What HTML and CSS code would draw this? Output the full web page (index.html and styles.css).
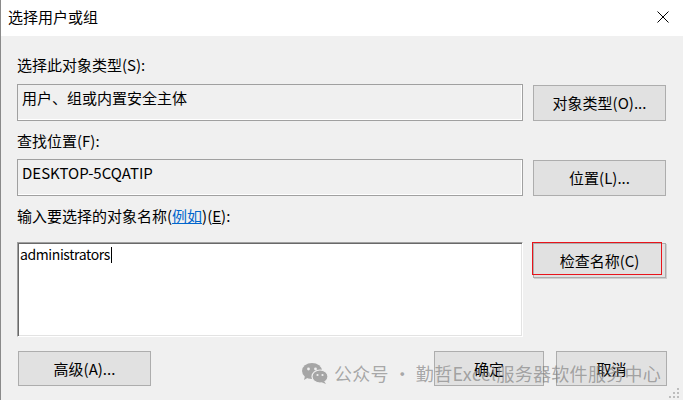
FILE: index.html
```html
<!DOCTYPE html>
<html lang="zh-CN">
<head>
<meta charset="utf-8">
<title>选择用户或组</title>
<link rel="stylesheet" href="styles.css">
</head>
<body>
<div class="window">
  <div class="titlebar">
    <span class="title">选择用户或组</span>
    <span class="close">
      <svg width="12" height="12" viewBox="0 0 12 12"><path d="M0.5 0.5 L11.5 11.5 M11.5 0.5 L0.5 11.5" stroke="#000" stroke-width="1" fill="none"/></svg>
    </span>
  </div>
  <div class="body">
    <div class="form">
      <div class="label first">选择此对象类型(S):</div>
      <div class="field">用户、组或内置安全主体</div>
      <div class="btn">对象类型(O)...</div>

      <div class="label">查找位置(F):</div>
      <div class="field">DESKTOP-5CQATIP</div>
      <div class="btn">位置(L)...</div>

      <div class="label third">输入要选择的对象名称(<a class="link">例如</a>)(<u>E</u>):</div>
      <div class="textarea">administrators<span class="caret"></span></div>
      <div class="btn check">检查名称(C)</div>
    </div>
    <div class="footer">
      <div class="btn adv">高级(A)...</div>
      <div class="spacer"></div>
      <div class="btn ok">确定</div>
      <div class="btn cancel">取消</div>
    </div>
    <div class="watermark">
      <svg class="wechat" width="26" height="21" viewBox="0 0 26 21">
        <ellipse cx="10" cy="8" rx="10" ry="8" fill="#9a9a9a"/>
        <path d="M3 13 L2 17 L7 14 Z" fill="#9a9a9a"/>
        <circle cx="6.5" cy="6" r="1.4" fill="#f0f0f0"/>
        <circle cx="13.5" cy="6" r="1.4" fill="#f0f0f0"/>
        <ellipse cx="18" cy="13.5" rx="8" ry="6.5" fill="#9a9a9a" stroke="#f0f0f0" stroke-width="1.2"/>
        <path d="M22 18 L24 21 L19 19 Z" fill="#9a9a9a"/>
        <circle cx="15.5" cy="12" r="1.1" fill="#f0f0f0"/>
        <circle cx="20.5" cy="12" r="1.1" fill="#f0f0f0"/>
      </svg>
      <span class="wm-text">公众号 · 勤哲Excel服务器软件服务中心</span>
    </div>
    <svg class="grip" width="12" height="12" viewBox="0 0 12 12">
      <rect x="8" y="0" width="2" height="2" fill="#bdbdbd"/>
      <rect x="4" y="4" width="2" height="2" fill="#bdbdbd"/>
      <rect x="8" y="4" width="2" height="2" fill="#bdbdbd"/>
      <rect x="0" y="8" width="2" height="2" fill="#bdbdbd"/>
      <rect x="4" y="8" width="2" height="2" fill="#bdbdbd"/>
      <rect x="8" y="8" width="2" height="2" fill="#bdbdbd"/>
    </svg>
  </div>
</div>
</body>
</html>
```

FILE: styles.css
```css
* { box-sizing: border-box; }
html, body {
  margin: 0;
  padding: 0;
  width: 683px;
  height: 400px;
  overflow: hidden;
  background: #f0f0f0;
}
body {
  font-family: "Noto Sans CJK SC", "Noto Sans", sans-serif;
  font-size: 15px;
  color: #000;
}
.window {
  width: 683px;
  height: 400px;
  border-left: 1px solid #8a8a8a;
  display: flex;
  flex-direction: column;
}
.titlebar {
  height: 36px;
  flex: none;
  background: #fff;
  display: flex;
  align-items: center;
  padding-left: 7px;
  padding-right: 14px;
}
.title {
  flex: 1;
  font-size: 15px;
  line-height: 20px;
  margin-top: -2px;
}
.close {
  display: flex;
  width: 12px;
  height: 12px;
  margin-top: -2px;
}
.body {
  position: relative;
  flex: 1;
  background: #f0f0f0;
  padding-left: 16px;
}
.form {
  display: grid;
  grid-template-columns: 506px 133px;
  column-gap: 10px;
  align-items: start;
}
.label {
  grid-column: 1 / span 2;
  line-height: 20px;
  margin-top: 10px;
  margin-bottom: 8px;
}
.label.first {
  margin-top: 19px;
  margin-bottom: 9px;
}
.label.third {
  margin-bottom: 16px;
}
.link {
  color: #0066cc;
  text-decoration: underline;
}
.field {
  height: 37px;
  border: 1px solid #a0a0a0;
  box-shadow: inset -1px -1px 0 #fff;
  padding: 3px 4px;
  line-height: 20px;
}
.btn {
  height: 36px;
  background: #e1e1e1;
  border: 1px solid #adadad;
  display: flex;
  align-items: center;
  justify-content: center;
  line-height: 20px;
  margin-top: 1px;
}
.textarea {
  height: 95px;
  background: #fff;
  border-style: solid;
  border-width: 1px;
  border-color: #a0a0a0 #fff #fff #a0a0a0;
  box-shadow: inset 1px 1px 0 #696969, inset -1px -1px 0 #e3e3e3;
  padding: 1px 2px;
  font-size: 14px;
  letter-spacing: -0.4px;
  line-height: 20px;
  display: flex;
  align-items: flex-start;
}
.caret {
  display: inline-block;
  width: 1px;
  height: 16px;
  background: #000;
  margin-top: 3px;
  margin-left: 1px;
}
.btn.check {
  position: relative;
  margin-top: 1px;
  height: 35px;
  box-shadow: 1px 1px 0 #cfcfcf;
}
.btn.check::after {
  content: "";
  position: absolute;
  top: -2px;
  left: -2px;
  right: 3px;
  bottom: 2px;
  border: 1px solid #e8141b;
}
.footer {
  display: flex;
  margin-top: 14px;
  width: 650px;
}
.footer .btn {
  height: 35px;
  margin-top: 0;
}
.btn.adv { width: 133px; margin-left: 1px; }
.spacer { flex: 1; }
.btn.ok { width: 110px; margin-right: 12px; }
.btn.cancel { width: 111px; }
.watermark {
  position: absolute;
  left: 301px;
  top: 325px;
  display: flex;
  align-items: center;
  gap: 6px;
  color: rgba(120, 120, 120, 0.62);
  pointer-events: none;
}
.wechat { opacity: 0.85; }
.wm-text {
  font-size: 18px;
  line-height: 24px;
  letter-spacing: 0.3px;
}
.grip {
  position: absolute;
  right: 2px;
  bottom: 0px;
}
```
